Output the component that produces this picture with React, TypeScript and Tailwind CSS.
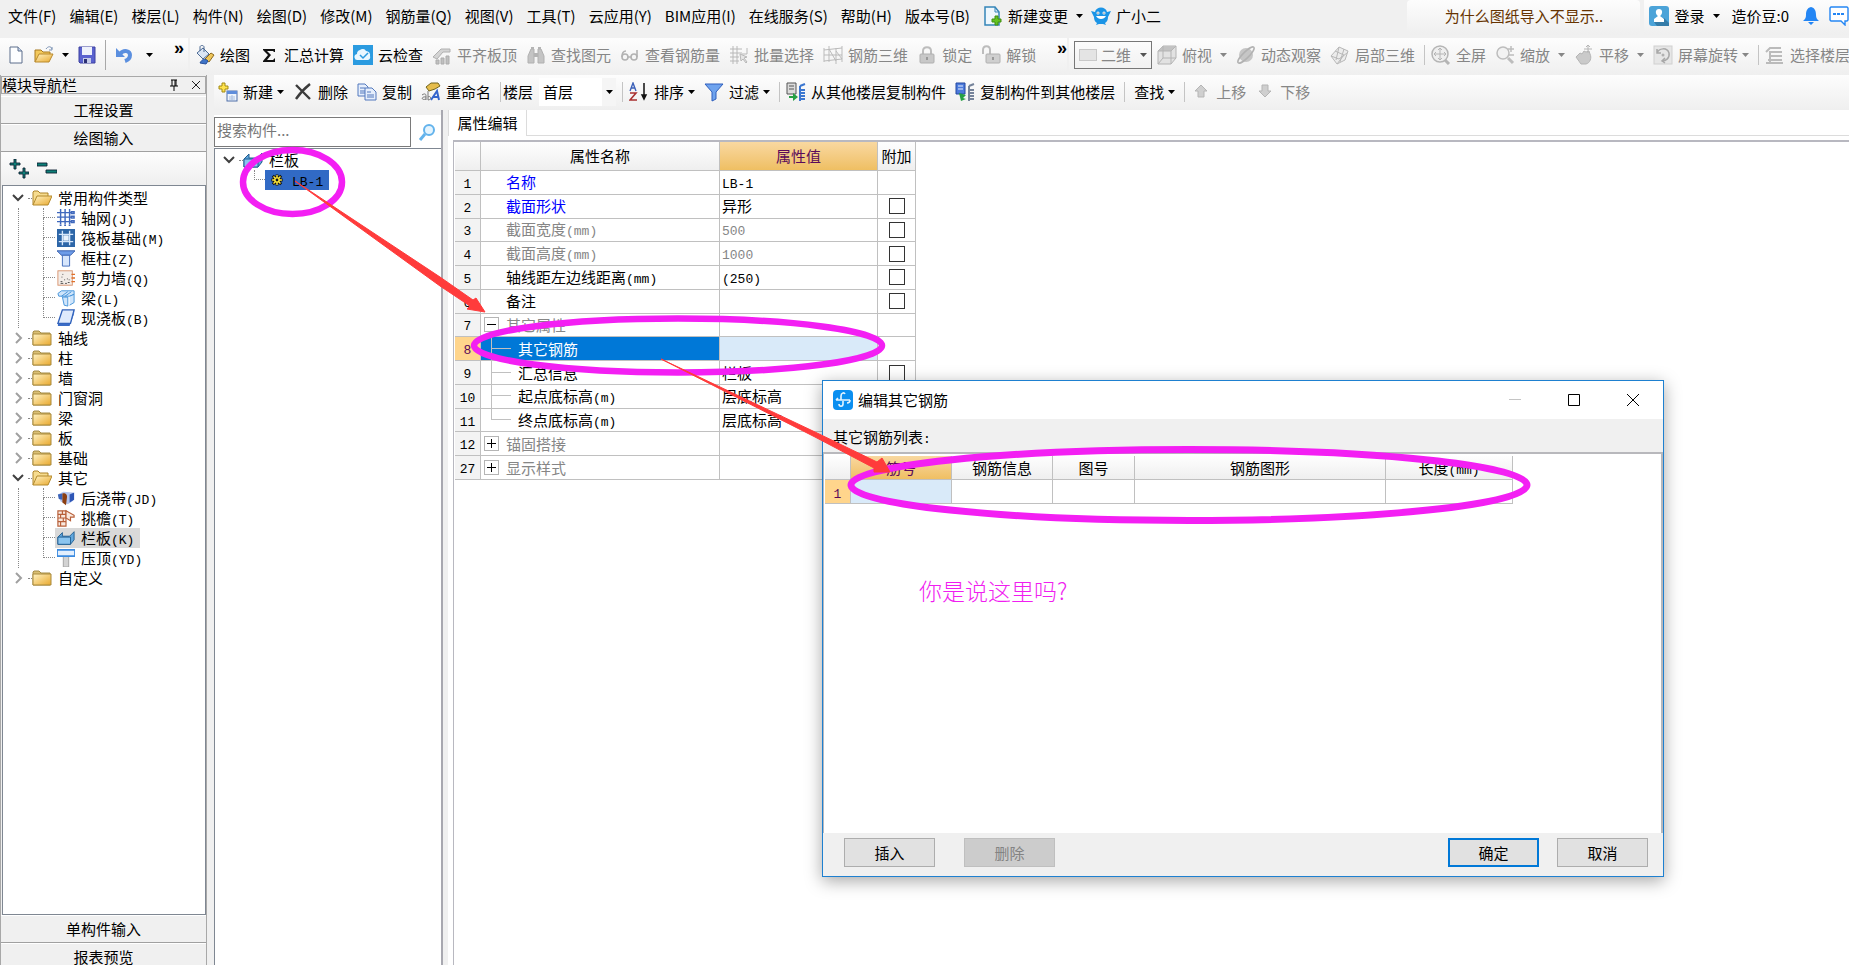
import type { ReactNode } from 'react';
import { clsx } from 'clsx';

const glyphs: Record<string, ReactNode> = {
  newFile: (
    <>
      <path d="M4 2h8l4 4v12H4z" fill="#fdfeff" stroke="#5d6f8c" />
      <path d="M12 2v4h4" fill="#c9d8ee" stroke="#5d6f8c" />
    </>
  ),
  open: (
    <>
      <path d="M1 17V5h6l2 2h7v3" fill="#f3c95c" stroke="#a87a22" />
      <path d="M1 17l4-8h14l-4 8z" fill="url(#folderFill)" stroke="#b98a2d" />
      <path d="M12 4c2-3 5-3 6 0m0-2v3h-3" fill="none" stroke="#7b93b5" />
    </>
  ),
  save: (
    <>
      <path d="M2 2h16v16H3l-1-1z" fill="#5a62cf" stroke="#3c41a0" />
      <path d="M5 2h10v8H5z" fill="#eef1fb" />
      <path d="M6 13h8v5H6z" fill="#c5cbe8" />
      <path d="M7 14h3v4H7z" fill="#2b2f73" />
    </>
  ),
  undo: (
    <>
      <path d="M6 9c4-5 10-3 10 1 0 3-2 5-5 6" fill="none" stroke="#5b8fdf" strokeWidth="4" />
      <path d="M2 3v9h9z" fill="#5b8fdf" />
    </>
  ),
  draw: (
    <>
      <path d="M2 8l6-5 6 6-6 5z" fill="#dbe6f5" stroke="#4c6a94" />
      <path d="M5 6V2c0-2 4-2 4 0v5" fill="none" stroke="#4c6a94" />
      <path d="M10 14l6-6 3 2-5 7z" fill="#efc65a" stroke="#8c6a20" />
      <path d="M5 18c2-4 5-5 8-2l-2 3z" fill="#3f74c7" stroke="#27509b" />
    </>
  ),
  sigma: <path d="M4 4h12v3h-1l-1-1H8l4 4-4 5h6l2-2h0v4H4v-1l5-6-5-5z" fill="#111" />,
  cloud: (
    <>
      <rect width="20" height="20" fill="#2b9be0" />
      <path d="M5 15a3 3 0 0 1-1-6 4 4 0 0 1 3-4 4 4 0 0 1 6 1 4 4 0 0 1 4 5 3 3 0 0 1-2 4z" fill="#e9f7ff" />
      <path d="M7 10l3 3 5-5" fill="none" stroke="#2b9be0" strokeWidth="1.5" />
    </>
  ),
  align: (
    <>
      <path d="M1 12l8-8h9v3h-7l-6 7z" fill="#d4d4d4" stroke="#b0b0b0" />
      <path d="M4 15h3v4H4zM9 13h3v6H9zM14 11h3v8h-3z" fill="#c0c0c0" stroke="#acacac" />
    </>
  ),
  binoculars: (
    <>
      <path d="M2 18v-7l3-7h3v14zM18 18v-7l-3-7h-3v14z" fill="#c4c4c4" stroke="#b0b0b0" />
      <path d="M8 8h4v4H8zM5 2h3v2H5zM12 2h3v2h-3z" fill="#b4b4b4" />
    </>
  ),
  glasses: (
    <g fill="none" stroke="#b2b2b2" strokeWidth="1.6">
      <circle cx="5" cy="12" r="3" />
      <circle cx="14" cy="12" r="3" />
      <path d="M2 12c0-4 1-6 4-6M17 12V5M8 12h3" />
    </g>
  ),
  batch: (
    <g fill="none" stroke="#b8b8b8">
      <path d="M1 4h12M1 8h12M1 12h9M1 16h9M4 1v18M8 1v18M18 3v6h-5" />
      <path d="M11 9l7 3-3 1 3 4-1 1-3-4-2 2z" fill="#e6e6e6" />
    </g>
  ),
  rebar3d: <path d="M1 3v14M6 1v16M13 3v16M19 1v16M1 5l18-2M1 10h18M1 16l18-2M6 4l7 12M13 6l6 8" fill="none" stroke="#bbb" />,
  lock: (
    <>
      <path d="M6 10V6c0-5 8-5 8 0v4" fill="none" stroke="#bdbdbd" strokeWidth="2" />
      <rect x="3" y="9" width="14" height="9" rx="1" fill="#c8c8c8" stroke="#b0b0b0" />
      <path d="M10 12v3" stroke="#999" strokeWidth="2" />
    </>
  ),
  unlock: (
    <>
      <path d="M2 9V5c0-5 7-5 7 0v4" fill="none" stroke="#bdbdbd" strokeWidth="2" />
      <rect x="5" y="9" width="14" height="9" rx="1" fill="#cfcfcf" stroke="#b0b0b0" />
      <path d="M12 12v3" stroke="#999" strokeWidth="2" />
    </>
  ),
  cube: (
    <>
      <path d="M1 6l5-5h13v12l-5 6H1z" fill="#e2e2e2" stroke="#b4b4b4" />
      <path d="M1 6l5-5h13l-5 5z" fill="#c2c2c2" />
      <path d="M1 6h13v13M14 6l5-5M6 1v12h13M6 13l-5 6" fill="none" stroke="#b4b4b4" />
    </>
  ),
  orbit: (
    <>
      <circle cx="10" cy="10" r="7" fill="#c6c6c6" />
      <ellipse cx="10" cy="10" rx="11" ry="3" transform="rotate(-45 10 10)" fill="none" stroke="#b2b2b2" strokeWidth="1.5" />
    </>
  ),
  local3d: (
    <g fill="#ececec" stroke="#b8b8b8">
      <path d="M1 11l8-9 9 4-3 9-8 4z" />
      <path d="M5 6l9 4-7 9M9 2l-3 13M14 4l-4 13M1 11l8 3 8-6" fill="none" />
    </g>
  ),
  full: (
    <g fill="none" stroke="#b5b5b5">
      <circle cx="9" cy="9" r="8" fill="#efefef" strokeWidth="1.5" />
      <path d="M9 3v12M3 9h12M7 5l2-2 2 2M7 13l2 2 2-2M5 7L3 9l2 2M13 7l2 2-2 2" />
      <path d="M14 15l4 4" strokeWidth="3" />
    </g>
  ),
  zoom: (
    <g fill="none" stroke="#bdbdbd">
      <circle cx="8" cy="8" r="6" fill="#f2f2f2" strokeWidth="1.5" />
      <path d="M13 13l5 5" strokeWidth="3" />
      <path d="M16 1v6M13 4h6M14 10h5" strokeWidth="1.5" />
    </g>
  ),
  pan: (
    <>
      <path d="M2 12l4-4 2 1 2-3 2 1 3-1 1 3c2 4 0 9-4 10H7z" fill="#cacaca" stroke="#b5b5b5" />
      <path d="M14 0v8M10 4h8M12 2l2-2 2 2" fill="none" stroke="#b5b5b5" />
    </>
  ),
  rotate: (
    <>
      <rect x="1" y="1" width="18" height="18" fill="#e6e6e6" stroke="#d0d0d0" />
      <path d="M4 8c2-5 10-6 12 0 1 5-3 8-7 8M4 4v4h4M12 13l-3 3 3 2" fill="none" stroke="#a8a8a8" strokeWidth="1.5" />
      <circle cx="10" cy="10" r="1.5" fill="#b0b0b0" />
    </>
  ),
  floors: <path d="M1 7l4-4h11M5 7h12M5 11h12M3 15h14M1 18h17M5 6v12" fill="none" stroke="#bbb" strokeWidth="2" />,
  add: (
    <>
      <path d="M4 1h3v3h3v3H7v3H4V7H1V4h3z" fill="#ffe34d" stroke="#a38a12" />
      <rect x="9" y="9" width="10" height="10" fill="#eef4fc" stroke="#4e6fa8" />
      <path d="M9 9h10v3H9z" fill="#5e8ddb" />
      <path d="M11 15h6M11 17h6M14 13v5" stroke="#a9bfe0" />
    </>
  ),
  remove: <path d="M3 3l14 14M17 2C12 6 7 11 3 17" fill="none" stroke="#3c3c3c" strokeWidth="2.4" />,
  copy: (
    <g fill="#e5eefc" stroke="#5379bd">
      <path d="M1 2h7l3 3v9H1z" />
      <path d="M3 6h5M3 9h5M3 11h5" />
      <path d="M8 6h7l4 4v8H8z" />
      <path d="M10 10h4M10 13h7M10 15h7" />
    </g>
  ),
  rename: (
    <>
      <path d="M5 5l5-4h7l2 3-5 3-6 2z" fill="#e6bd4c" stroke="#73651c" />
      <path d="M1 13c3-2 4-1 4 1v4M5 15c-5-1-5 4 0 2M7 9v9c4 0 3-5 0-3" fill="none" stroke="#777" />
      <path d="M10 18l6-9 2 9M12 15h6" fill="none" stroke="#3565cd" strokeWidth="2" />
    </>
  ),
  sort: (
    <>
      <path d="M1 9l3-8 3 8M2 6h4" fill="none" stroke="#3b60b8" strokeWidth="1.4" />
      <path d="M1 11h6l-6 7h7" fill="none" stroke="#a93030" strokeWidth="1.6" />
      <path d="M15 1v15M13 13l2 4 2-4z" fill="#111" stroke="#111" strokeWidth="1.5" />
    </>
  ),
  filter: <path d="M1 2h18l-7 8v7l-4 2v-9z" fill="#6ea3ee" stroke="#2f5fbd" />,
  copyFrom: (
    <>
      <path d="M1 1h9v11H1z" fill="#dcdcdc" stroke="#555" />
      <path d="M3 4h5M3 7h5" stroke="#555" />
      <path d="M3 14h4v-3l5 4-5 4v-3H3z" fill="#26a044" />
      <path d="M14 4l5-2M14 8h5M14 11h5M14 14h5M14 17h5M14 4v15" fill="none" stroke="#3c77d0" strokeWidth="2" />
    </>
  ),
  copyTo: (
    <>
      <path d="M1 1h9v11H1z" fill="#4c7bdc" stroke="#2548a0" />
      <path d="M3 4h5M3 7h5" stroke="#e8f0ff" />
      <path d="M4 11l2 8 5-2-3-1 3-3z" fill="#26a044" />
      <path d="M14 4l5-2M14 8h5M14 11h5M14 14h5M14 17h5M14 4v15" fill="none" stroke="#75839a" strokeWidth="2" />
    </>
  ),
  up: <path d="M10 3l6 6h-3v6H7V9H4z" fill="#cfcfcf" stroke="#b5b5b5" />,
  down: <path d="M10 15l6-6h-3V3H7v6H4z" fill="#cfcfcf" stroke="#b5b5b5" />,
  change: (
    <>
      <path d="M2 1h10l4 5v13H2z" fill="#eef7fd" stroke="#3585b8" strokeWidth="1.5" />
      <path d="M12 1v5h4" fill="none" stroke="#3585b8" />
      <path d="M12 10h3v3h3v3h-3v3h-3v-3H9v-3h3z" fill="#63c320" stroke="#3f8d10" />
    </>
  ),
  mascot: (
    <>
      <path d="M0 5l4 1c1-6 11-6 12 0l4-1-3 6c0 3-1 5-3 6l1 2-3-1h-4l-3 1 1-2c-2-1-3-3-3-6z" fill="#1b94e6" />
      <circle cx="7" cy="7" r="1.5" fill="#fff" />
      <circle cx="13" cy="7" r="1.5" fill="#fff" />
      <circle cx="7" cy="7" r=".6" fill="#123" />
      <circle cx="13" cy="7" r=".6" fill="#123" />
      <path d="M5 10c2 4 8 4 10 0z" fill="#fff" />
    </>
  ),
  user: (
    <>
      <rect width="20" height="20" rx="3" fill="#4ba3d8" />
      <path d="M5 16l10-4 5 5v3H8z" fill="#357ca8" />
      <path d="M10 3c4 0 4 5 1 7l4 3v3H5v-3l4-3c-3-2-3-7 1-7z" fill="#fff" />
    </>
  ),
  bell: <path d="M10 1c4 1 5 4 5 8 0 3 1 4 3 6H2c2-2 3-3 3-6 0-4 1-7 5-8zM7 16h6l-3 3z" fill="#2486f4" />,
  chat: (
    <>
      <path d="M2 1h16l1 1v12l-1 1h-2v4l-4-4H2l-1-1V2z" fill="#fff" stroke="#2486f4" strokeWidth="1.4" />
      <path d="M4 8h12" stroke="#2486f4" strokeWidth="2" strokeDasharray="3 1" />
    </>
  ),
  search: (
    <>
      <circle cx="12" cy="8" r="5" fill="#e4f4fe" stroke="#63b3ec" strokeWidth="2" />
      <path d="M8 12l-5 6" stroke="#63b3ec" strokeWidth="3" />
    </>
  ),
  expandAll: <path d="M5 0h2v4h4v2H7v4H5V6H1V4h4zM14 9h2v4h4v2h-4v4h-2v-4h-4v-2h4z" fill="#0d8078" stroke="#123" strokeWidth=".9" />,
  collapseAll: <path d="M0 4h10v3H0zM9 11h11v3H9z" fill="#0d8078" stroke="#123" strokeWidth=".9" />,
  folder: (
    <>
      <path d="M1 17V4l1-1h5l2 2h9v12z" fill="#d9bf75" stroke="#a58b45" />
      <path d="M1 6h18v11H1z" fill="url(#folderFill)" stroke="#a98a3d" />
    </>
  ),
  folderOpen: (
    <>
      <path d="M1 17V4l1-1h4l2 2h8v3" fill="#f6dc90" stroke="#ad8329" />
      <path d="M1 17l4-9h15l-4 9z" fill="url(#folderFill)" stroke="#b48a2c" />
    </>
  ),
  axis: (
    <g fill="none" stroke="#3f68bd" strokeWidth="1.6">
      <path d="M4 0v17M9 0v17M14 0v17M0 4h16M0 9h16M0 14h16" />
      <path d="M16 3h3v2h-3zM16 8h3v2h-3zM16 13h3v2h-3zM3 18h2M8 18h2M13 18h2" />
    </g>
  ),
  raft: (
    <>
      <rect width="20" height="20" fill="#2d66a8" />
      <path d="M6 2v16M14 2v16M2 6h16M2 14h16" stroke="#d6e7fb" strokeWidth="1.5" />
      <rect x="7" y="7" width="6" height="6" fill="#e9f2fd" />
    </>
  ),
  column: (
    <>
      <path d="M0 2h20l-5 5H5z" fill="#6d9ce8" stroke="#2e57a8" />
      <path d="M6 7h8v12H6z" fill="#d7e6fc" stroke="#3a66b8" />
    </>
  ),
  wall: (
    <>
      <rect x="1" y="2" width="16" height="16" fill="#f3ede8" stroke="#d8916a" />
      <path d="M4 14h2M8 12h1M12 15h2M5 9h1M9 16h2M11 11h1M6 6h1M4 16h3M13 12h1" stroke="#444" />
      <path d="M16 6h4M16 10h4M16 14h4" stroke="#e0702a" strokeWidth="1.5" />
    </>
  ),
  beam: (
    <g fill="#cfe5fb" stroke="#3d8fd8">
      <path d="M1 5l4-3h14v4l-5 2H2z" />
      <path d="M5 8l7-5M9 8l7-5M6 9l2 9 4 1V9zM14 8l5-2v9l-5 3" />
    </g>
  ),
  slab: (
    <>
      <path d="M6 1h13l-4 15H1z" fill="#dfeafc" stroke="#2e5fb8" strokeWidth="1.5" />
      <path d="M1 16v3h13l5-14V1l-4 15z" fill="#3a6cc6" />
    </>
  ),
  strip: (
    <>
      <path d="M1 6l6-3 11 1v9l-6 4-8-3z" fill="#b4c6ef" />
      <path d="M1 6l5-1v7l-4-1z" fill="#3b63b8" />
      <path d="M6 5c3-1 6 1 5 5l-1 8-4-3z" fill="#8c3f12" />
      <path d="M14 6l5-2v8l-5 3z" fill="#2e56b6" />
    </>
  ),
  eave: (
    <g fill="#f9e9df" stroke="#b8603a" strokeWidth="1.3">
      <path d="M1 2h9v17H1z" />
      <path d="M1 6h9M1 10h9M1 14h9M6 2v4M4 6v4M7 10v4M4 14v5" />
      <path d="M10 2l9 5v2h-4v4l-5-3z" />
    </g>
  ),
  panel: (
    <>
      <path d="M1 9l5-5v4h8l5-5v9l-4 5H1z" fill="#5fa6dd" stroke="#1f5c8f" />
      <path d="M1 9h14v8H1z" fill="#8ac4ef" stroke="#1f5c8f" />
    </>
  ),
  coping: (
    <>
      <path d="M7 8h6v12H7z" fill="#d3d3d3" stroke="#a0a0a0" />
      <path d="M0 1h20v7H0z" fill="#e3effd" stroke="#3a8ae0" strokeWidth="2" />
    </>
  ),
  gear: (
    <>
      <path d="M10 2v16M2 10h16M4 4l12 12M16 4L4 16" stroke="#111" strokeWidth="4" />
      <circle cx="10" cy="10" r="6" fill="#111" />
      <path d="M10 3v14M3 10h14M5 5l10 10M15 5L5 15" stroke="#ffe93b" strokeWidth="2" />
      <circle cx="10" cy="10" r="4" fill="#ffe93b" />
      <circle cx="10" cy="10" r="2" fill="#111" />
    </>
  ),
  app: (
    <>
      <rect width="20" height="20" rx="4" fill="#0b8ff0" />
      <path d="M3 10h14M10 11v3c0 3-4 3-4 0M8 6c0-3 3-4 4-2M8 6v4M17 10c0 2-1 3-3 3M3 10l2-2" fill="none" stroke="#e6f5ff" strokeWidth="1.6" />
    </>
  ),
};

function Icon({ name, className = 'size-5' }: { name: string; className?: string }) {
  return (
    <svg viewBox="0 0 20 20" className={clsx('shrink-0', className)} aria-hidden="true">
      {glyphs[name]}
    </svg>
  );
}

function Caret({ className }: { className?: string }) {
  return (
    <svg viewBox="0 0 7 4" className={clsx('h-1 w-[7px] shrink-0', className)} aria-hidden="true">
      <path d="M0 0h7L3.5 4z" fill="currentColor" />
    </svg>
  );
}

// Half-width characters use a smaller monospace face than the Chinese text.
function Mixed({ text }: { text: string }) {
  return (
    <>
      {text.split(/([\x21-\x7e]+)/).map((part, i) =>
        i % 2 ? (
          <span key={i} className="font-['Liberation_Mono',monospace] text-[13px] leading-none">{part}</span>
        ) : (
          part
        ),
      )}
    </>
  );
}

type ToolProps = { icon?: string; label: string; disabled?: boolean; menu?: 'near' | 'far' };

function Tool({ icon, label, disabled, menu }: ToolProps) {
  return (
    <button type="button" disabled={disabled} className="flex shrink-0 items-center text-black disabled:text-[#868686]">
      {icon && <Icon name={icon} className="mr-[5px] size-5" />}
      {label}
      {menu && <Caret className={menu === 'far' ? 'ml-2' : 'ml-1'} />}
    </button>
  );
}

const Divider = ({ className }: { className?: string }) => (
  <span className={clsx('h-5 w-px shrink-0 bg-[#c4c4c4]', className)} />
);

const More = ({ className }: { className?: string }) => (
  <span className={clsx("ml-auto self-start font-['Liberation_Sans',sans-serif] text-[18px] leading-5 font-bold", className)}>»</span>
);

const bar = 'bg-linear-to-b from-[#fdfdfd] to-[#efefef]';

const menus = [
  '文件(F)', '编辑(E)', '楼层(L)', '构件(N)', '绘图(D)', '修改(M)', '钢筋量(Q)', '视图(V)', '工具(T)',
  '云应用(Y)', 'BIM应用(I)', '在线服务(S)', '帮助(H)', '版本号(B)',
];

function MenuBar() {
  return (
    <header className="flex h-[38px] shrink-0 items-start justify-between">
      <nav className="flex h-[31px] items-center gap-[13px] pl-2">
        {menus.map((m) => (
          <button key={m} type="button" className="shrink-0">{m}</button>
        ))}
        <div className="flex items-center gap-2">
          <Tool icon="change" label="新建变更" menu="far" />
          <Tool icon="mascot" label="广小二" />
        </div>
      </nav>
      <div className="flex h-[35px] items-center">
        <a href="#help" className={clsx('mr-1 flex h-full w-[233px] items-center justify-center rounded-sm pb-1 text-[#663300]', bar)}>
          为什么图纸导入不显示..
        </a>
        <div className={clsx('flex h-full items-center gap-2 pb-1 pl-[5px]', bar)}>
          <Tool icon="user" label="登录" menu="far" />
          <span className="mx-1">造价豆:0</span>
          <button type="button" aria-label="通知"><Icon name="bell" /></button>
          <button type="button" aria-label="消息"><Icon name="chat" /></button>
        </div>
      </div>
    </header>
  );
}

const editTools: ToolProps[] = [
  { icon: 'draw', label: '绘图' },
  { icon: 'sigma', label: '汇总计算' },
  { icon: 'cloud', label: '云检查' },
  { icon: 'align', label: '平齐板顶', disabled: true },
  { icon: 'binoculars', label: '查找图元', disabled: true },
  { icon: 'glasses', label: '查看钢筋量', disabled: true },
  { icon: 'batch', label: '批量选择', disabled: true },
  { icon: 'rebar3d', label: '钢筋三维', disabled: true },
  { icon: 'lock', label: '锁定', disabled: true },
  { icon: 'unlock', label: '解锁', disabled: true },
];

function MainToolbar() {
  return (
    <div className="flex h-[37px] shrink-0 gap-0.5">
      <div className={clsx('flex w-[188px] shrink-0 items-center pb-1 pl-1.5', bar)}>
        <button type="button" aria-label="新建"><Icon name="newFile" /></button>
        <button type="button" aria-label="打开" className="ml-2 flex items-center gap-2"><Icon name="open" /><Caret /></button>
        <button type="button" aria-label="保存" className="ml-2"><Icon name="save" /></button>
        <span className="mx-2 h-[30px] w-px bg-[#a8a8a8]" />
        <button type="button" aria-label="撤销" className="flex items-center gap-2"><Icon name="undo" /><Caret className="ml-1" /></button>
        <More className="mr-1" />
      </div>
      <div className={clsx('flex w-[877px] shrink-0 items-center gap-[9px] pb-1 pl-[5px]', bar)}>
        {editTools.map((t) => <Tool key={t.label} {...t} />)}
        <More />
      </div>
      <div className={clsx('flex min-w-0 grow items-center gap-[9px] pb-1 pl-[5px]', bar)}>
        <label className="relative -mr-1 flex h-7 w-[78px] shrink-0 items-center border border-[#777] text-[#868686]">
          <span className="ml-1 h-3 w-[18px] border border-[#c8c8c8] bg-[#e4e4e4]" />
          <select disabled aria-label="视图模式" className="ml-1 grow appearance-none">
            <option>二维</option>
          </select>
          <Caret className="absolute right-1 text-[#555]" />
        </label>
        <Tool icon="cube" label="俯视" disabled menu="far" />
        <Tool icon="orbit" label="动态观察" disabled />
        <Tool icon="local3d" label="局部三维" disabled />
        <Divider className="-mr-[3px]" />
        <Tool icon="full" label="全屏" disabled />
        <Tool icon="zoom" label="缩放" disabled menu="far" />
        <Tool icon="pan" label="平移" disabled menu="far" />
        <Tool icon="rotate" label="屏幕旋转" disabled menu="near" />
        <Divider className="-mr-[3px]" />
        <Tool icon="floors" label="选择楼层" disabled />
      </div>
    </div>
  );
}

function ComponentToolbar() {
  return (
    <div className={clsx('flex h-[35px] shrink-0 items-center gap-[9px] pb-0.5 pl-1', bar)}>
      <Tool icon="add" label="新建" menu="near" />
      <Tool icon="remove" label="删除" />
      <Tool icon="copy" label="复制" />
      <Tool icon="rename" label="重命名" />
      <div className="flex items-center gap-1.5">
        <Divider />
        <label htmlFor="floor" className="-ml-1 shrink-0">楼层</label>
        <div className="relative flex h-7 w-[77px] items-center bg-white">
          <select id="floor" className="w-full appearance-none pl-1">
            <option>首层</option>
          </select>
          <span className="pointer-events-none absolute inset-y-0 right-0 flex w-[14px] items-center justify-center bg-[#f5f5f5]">
            <Caret />
          </span>
        </div>
        <Divider />
        <Tool icon="sort" label="排序" menu="near" />
      </div>
      <Tool icon="filter" label="过滤" menu="near" />
      <Divider className="-mr-[3px]" />
      <Tool icon="copyFrom" label="从其他楼层复制构件" />
      <Tool icon="copyTo" label="复制构件到其他楼层" />
      <Divider />
      <Tool label="查找" menu="near" />
      <Divider className="-mr-[3px]" />
      <Tool icon="up" label="上移" disabled />
      <Tool icon="down" label="下移" disabled />
    </div>
  );
}

type Node = { label: string; icon?: string; children?: Node[]; selected?: boolean };

const modules: Node[] = [
  {
    label: '常用构件类型',
    children: [
      { label: '轴网(J)', icon: 'axis' },
      { label: '筏板基础(M)', icon: 'raft' },
      { label: '框柱(Z)', icon: 'column' },
      { label: '剪力墙(Q)', icon: 'wall' },
      { label: '梁(L)', icon: 'beam' },
      { label: '现浇板(B)', icon: 'slab' },
    ],
  },
  { label: '轴线' },
  { label: '柱' },
  { label: '墙' },
  { label: '门窗洞' },
  { label: '梁' },
  { label: '板' },
  { label: '基础' },
  {
    label: '其它',
    children: [
      { label: '后浇带(JD)', icon: 'strip' },
      { label: '挑檐(T)', icon: 'eave' },
      { label: '栏板(K)', icon: 'panel', selected: true },
      { label: '压顶(YD)', icon: 'coping' },
    ],
  },
  { label: '自定义' },
];

function Chevron({ open }: { open?: boolean }) {
  return (
    <svg viewBox="0 0 12 12" className="size-3 shrink-0" aria-hidden="true">
      <path d={open ? 'M1 3l5 5 5-5' : 'M4 1l5 5-5 5'} fill="none" stroke={open ? '#404040' : '#a0a0a0'} strokeWidth="2" />
    </svg>
  );
}

function ModuleTree() {
  return (
    <ul className="pl-[9px] leading-5">
      {modules.map((m) => (
        <li key={m.label}>
          <button type="button" className="flex h-5 items-center">
            <Chevron open={!!m.children} />
            <span className="ml-1 w-1 border-t border-dotted border-[#888]" />
            <Icon name={m.children ? 'folderOpen' : 'folder'} />
            <span className="ml-1.5">{m.label}</span>
          </button>
          {m.children && (
            <ul className="ml-1.5 border-l border-dotted border-[#888] pl-6">
              {m.children.map((c, i) => (
                <li key={c.label} className="flex h-5 items-center">
                  <span className="flex h-full w-3 flex-col">
                    <span className="h-1/2 border-b border-l border-dotted border-[#888]" />
                    {i < m.children!.length - 1 && <span className="h-1/2 border-l border-dotted border-[#888]" />}
                  </span>
                  <button type="button" className={clsx('flex h-5 items-center pr-1.5', c.selected && 'bg-[#d9d9d9]')}>
                    <Icon name={c.icon!} className="ml-0.5 size-[18px]" />
                    <span className="ml-1.5"><Mixed text={c.label} /></span>
                  </button>
                </li>
              ))}
            </ul>
          )}
        </li>
      ))}
    </ul>
  );
}

const section = 'h-7 shrink-0 border-t border-b border-t-white border-b-[#a0a0a0] text-center leading-[26px]';

function ModuleNav() {
  return (
    <aside className="flex w-[207px] shrink-0 flex-col border-r border-l border-[#a8a8a8]">
      <div className="mt-px mb-0.5 flex h-[18px] shrink-0 items-center border border-[#a8a8a8]">
        <h2 className="leading-4">模块导航栏</h2>
        <button type="button" aria-label="固定" className="mr-3 ml-auto">
          <svg viewBox="0 0 10 12" className="h-3 w-2.5">
            <path d="M2 1h6M3 1v6M7 1v6M6 1v6M1 7h8M5 7v5" fill="none" stroke="#000" />
          </svg>
        </button>
        <button type="button" aria-label="关闭" className="mr-1">
          <svg viewBox="0 0 10 10" className="size-2.5">
            <path d="M1 1l8 8M9 1l-8 8" stroke="#222" />
          </svg>
        </button>
      </div>
      <button type="button" className={section}>工程设置</button>
      <button type="button" className={section}>绘图输入</button>
      <div className={clsx('flex h-[33px] shrink-0 items-center gap-2 pl-2', bar)}>
        <button type="button" aria-label="全部展开"><Icon name="expandAll" /></button>
        <button type="button" aria-label="全部折叠"><Icon name="collapseAll" /></button>
      </div>
      <div className="ml-px grow overflow-hidden border border-[#7f8792] bg-white pt-0.5">
        <ModuleTree />
      </div>
      <button type="button" className={section}>单构件输入</button>
      <button type="button" className="h-[22px] shrink-0 border-t border-white text-center leading-[26px]">
        报表预览
      </button>
    </aside>
  );
}

function ComponentList() {
  return (
    <section className="flex w-[229px] shrink-0 flex-col border-r-2 border-[#a8a8b0]">
      <div className="mt-[5px] flex h-[33px] shrink-0 items-center bg-white">
        <input
          type="search"
          aria-label="搜索构件"
          placeholder="搜索构件..."
          className="h-[30px] w-[197px] border border-[#7a7a7a] px-0.5 pb-1 placeholder:text-[#777]"
        />
        <button type="button" aria-label="搜索" className="ml-1.5"><Icon name="search" /></button>
      </div>
      <ul className="grow border border-r-0 border-b-0 border-[#7f8792] bg-white pt-px pl-2">
        <li>
          <button type="button" className="flex h-5 items-center">
            <Chevron open />
            <span className="ml-1 w-1 border-t border-dotted border-[#888]" />
            <Icon name="panel" />
            <span className="ml-1.5">栏板</span>
          </button>
          <ul className="ml-[31px]">
            <li className="flex h-5 items-start">
              <span className="h-2.5 w-[11px] border-b border-l border-dotted border-[#888]" />
              <button type="button" className="flex h-5 w-16 items-center bg-[#316ac5] pl-[5px] text-black">
                <Icon name="gear" className="size-[14px]" />
                <span className="ml-2"><Mixed text="LB-1" /></span>
              </button>
            </li>
          </ul>
        </li>
      </ul>
    </section>
  );
}

type Row = {
  no: number;
  name: string;
  value?: string;
  tone?: 'blue' | 'gray';
  check?: boolean;
  group?: '+' | '−';
  child?: 'mid' | 'last';
  selected?: boolean;
};

const rows: Row[] = [
  { no: 1, name: '名称', value: 'LB-1', tone: 'blue' },
  { no: 2, name: '截面形状', value: '异形', tone: 'blue', check: true },
  { no: 3, name: '截面宽度(mm)', value: '500', tone: 'gray', check: true },
  { no: 4, name: '截面高度(mm)', value: '1000', tone: 'gray', check: true },
  { no: 5, name: '轴线距左边线距离(mm)', value: '(250)', check: true },
  { no: 6, name: '备注', check: true },
  { no: 7, name: '其它属性', tone: 'gray', group: '−' },
  { no: 8, name: '其它钢筋', child: 'mid', selected: true },
  { no: 9, name: '汇总信息', value: '栏板', child: 'mid', check: true },
  { no: 10, name: '起点底标高(m)', value: '层底标高', child: 'mid' },
  { no: 11, name: '终点底标高(m)', value: '层底标高', child: 'last' },
  { no: 12, name: '锚固搭接', tone: 'gray', group: '+' },
  { no: 27, name: '显示样式', tone: 'gray', group: '+' },
];

const head = 'border-r border-b border-[#c0c0c0] bg-linear-to-b from-[#fefefe] to-[#efefef] p-0 font-normal';
const headActive = 'border-r border-b border-[#c0c0c0] bg-linear-to-b from-[#f9d8a0] to-[#efbf62] p-0 font-normal text-[#5a0a5a]';
const cell = 'border-r border-b border-[#c0c0c0] p-0';

function PropertyTable() {
  return (
    <table className="h-[338px] w-[461px] table-fixed border-separate border-spacing-0 leading-4">
      <colgroup>
        <col className="w-[26px]" />
        <col className="w-[239px]" />
        <col className="w-[158px]" />
        <col className="w-[38px]" />
      </colgroup>
      <thead>
        <tr className="h-[29px]">
          <th className={head} aria-label="序号" />
          <th className={head}>属性名称</th>
          <th className={headActive}>属性值</th>
          <th className={head}>附加</th>
        </tr>
      </thead>
      <tbody>
        {rows.map((r) => (
          <tr key={r.no}>
            <th className={clsx(cell, 'font-normal', r.selected ? 'bg-[#ffd58c] text-[#5a0a5a]' : 'bg-[#f3f3f3]')}>
              <Mixed text={String(r.no)} />
            </th>
            <td className={clsx(cell, 'h-px', r.selected && 'bg-[#0078d7] text-white')}>
              <div className="flex h-full items-center">
                <span className="flex h-full w-[25px] shrink-0 items-center pl-[3px]">
                  {r.group && (
                    <button type="button" aria-label={r.name} className="flex size-[15px] items-center justify-center border border-[#b5b5b5] bg-white text-black">
                      <svg viewBox="0 0 9 9" className="size-[9px]">
                        <path d={r.group === '+' ? 'M0 4.5h9M4.5 0v9' : 'M0 4.5h9'} stroke="#000" />
                      </svg>
                    </button>
                  )}
                  {r.child && (
                    <span className="ml-[7px] flex h-full w-5 shrink-0 flex-col">
                      <span className="h-1/2 border-b border-l border-[#c0c0c0]" />
                      {r.child === 'mid' && <span className="h-1/2 border-l border-[#c0c0c0]" />}
                    </span>
                  )}
                </span>
                <span className={clsx(r.child && 'pl-3', r.tone === 'blue' && 'text-[#0000ff]', r.tone === 'gray' && 'text-[#868686]')}>
                  <Mixed text={r.name} />
                </span>
              </div>
            </td>
            <td className={clsx(cell, 'pl-0.5', r.selected && 'bg-[#d9eaf9]', r.tone === 'gray' && 'text-[#868686]')}>
              {r.value && <Mixed text={r.value} />}
            </td>
            <td className={cell}>
              {r.check && (
                <input type="checkbox" aria-label={`附加 ${r.name}`} className="mx-auto block size-4 appearance-none border border-[#333] bg-white" />
              )}
            </td>
          </tr>
        ))}
      </tbody>
    </table>
  );
}

const dialogButton = 'h-[29px] w-[91px] border border-[#adadad] bg-[#e1e1e1] disabled:border-[#bfbfbf] disabled:bg-[#cccccc] disabled:text-[#838383]';

function RebarDialog() {
  return (
    <div
      role="dialog"
      aria-labelledby="dialog-title"
      className="absolute top-[380px] left-[822px] flex h-[497px] w-[842px] flex-col border border-[#1e80d0] bg-[#f0f0f0] shadow-[0_4px_16px_rgba(0,0,0,0.35)]"
    >
      <div className="flex h-[38px] shrink-0 items-center bg-white pl-2.5">
        <Icon name="app" />
        <h2 id="dialog-title" className="ml-[5px]">编辑其它钢筋</h2>
        <div className="ml-auto flex items-center gap-[47px] pr-6">
          <button type="button" aria-label="最小化" disabled><svg viewBox="0 0 12 12" className="size-3"><path d="M0 5.5h12" stroke="#c4c4c4" /></svg></button>
          <button type="button" aria-label="最大化"><svg viewBox="0 0 12 12" className="size-3"><path d="M.5.5h11v11H.5z" fill="none" stroke="#000" /></svg></button>
          <button type="button" aria-label="关闭"><svg viewBox="0 0 12 12" className="size-3"><path d="M0 0l12 12M12 0L0 12" stroke="#000" /></svg></button>
        </div>
      </div>
      <p className="h-[33px] shrink-0 pt-1 pl-2.5 leading-7"><Mixed text="其它钢筋列表:" /></p>
      <div className="grow border-t-2 border-r-2 border-l border-[#b8b8bc] bg-white pt-0.5 pl-px">
        <table className="w-[688px] table-fixed border-separate border-spacing-0 leading-5">
          <colgroup>
            <col className="w-[26px]" />
            <col className="w-[101px]" />
            <col className="w-[101px]" />
            <col className="w-[82px]" />
            <col className="w-[251px]" />
            <col className="w-[127px]" />
          </colgroup>
          <thead>
            <tr className="h-6">
              <th className={head} aria-label="序号" />
              <th className={headActive}>筋号</th>
              <th className={head}>钢筋信息</th>
              <th className={head}>图号</th>
              <th className={head}>钢筋图形</th>
              <th className={head}><Mixed text="长度(mm)" /></th>
            </tr>
          </thead>
          <tbody>
            <tr className="h-6">
              <th className={clsx(cell, 'bg-[#ffd58c] font-normal text-[#5a0a5a]')}><Mixed text="1" /></th>
              <td className={clsx(cell, 'bg-[#d9eaf9]')} />
              <td className={cell} />
              <td className={cell} />
              <td className={cell} />
              <td className={cell} />
            </tr>
          </tbody>
        </table>
      </div>
      <div className="flex h-[43px] shrink-0 items-start pt-[5px] pr-[15px] pl-[21px]">
        <button type="button" className={dialogButton}>插入</button>
        <button type="button" disabled className={clsx(dialogButton, 'ml-[29px]')}>删除</button>
        <button type="button" className="mr-[18px] ml-auto h-[29px] w-[91px] border-2 border-[#0078d7] bg-[#e1e1e1]">确定</button>
        <button type="button" className={dialogButton}>取消</button>
      </div>
    </div>
  );
}

// Hand-drawn markup that floats above the windows.
function Annotations() {
  return (
    <>
      <p className="absolute top-[572px] left-[919px] text-[23px] leading-9 font-light text-[#f01ef0]">你是说这里吗?</p>
      <svg viewBox="0 0 1849 965" className="pointer-events-none absolute top-0 left-0 h-[965px] w-[1849px]" aria-hidden="true">
        <g fill="none" stroke="#f31ff3">
          <ellipse cx="292.5" cy="182" rx="49.5" ry="32" strokeWidth="6.5" />
          <ellipse cx="678" cy="345.5" rx="204" ry="27" strokeWidth="6.5" />
          <ellipse cx="1189" cy="485" rx="338" ry="35.5" strokeWidth="7" />
        </g>
        <g fill="#ff3b3b" stroke="#ff3b3b" strokeLinejoin="round">
          <path d="M295 181L440 277 473 300 476 298 485 312 467 309 470 306 440 286z" />
          <path d="M661 359L815 432 877 462 882 458 890 472 874 472 874 468 815 437z" />
        </g>
      </svg>
    </>
  );
}

export default function App() {
  return (
    <div className="relative flex h-screen flex-col overflow-hidden bg-[#f0f0f0] font-['Noto_Sans_CJK_SC',sans-serif] text-[15px] leading-5 whitespace-nowrap text-black">
      <svg className="absolute size-0" aria-hidden="true">
        <linearGradient id="folderFill" x1="0" y1="0" x2="1" y2="1">
          <stop offset="0" stopColor="#fff3c4" />
          <stop offset="1" stopColor="#e9a92e" />
        </linearGradient>
      </svg>
      <MenuBar />
      <MainToolbar />
      <div className="flex min-h-0 grow">
        <ModuleNav />
        <div className="ml-[7px] flex min-w-0 grow flex-col">
          <ComponentToolbar />
          <div className="flex min-h-0 grow">
            <ComponentList />
            <main className="ml-[5px] flex grow flex-col bg-white">
              <div role="tablist" className="flex h-[26px] shrink-0">
                <button type="button" role="tab" aria-selected="true" className="w-[79px] border-r border-l border-[#dcdcdc]">属性编辑</button>
                <span className="grow border-b border-[#dcdcdc]" />
              </div>
              <div className="mt-1 ml-[5px] grow border-t-2 border-l border-[#b8b8c0] pl-px">
                <PropertyTable />
              </div>
            </main>
          </div>
        </div>
      </div>
      <RebarDialog />
      <Annotations />
    </div>
  );
}
